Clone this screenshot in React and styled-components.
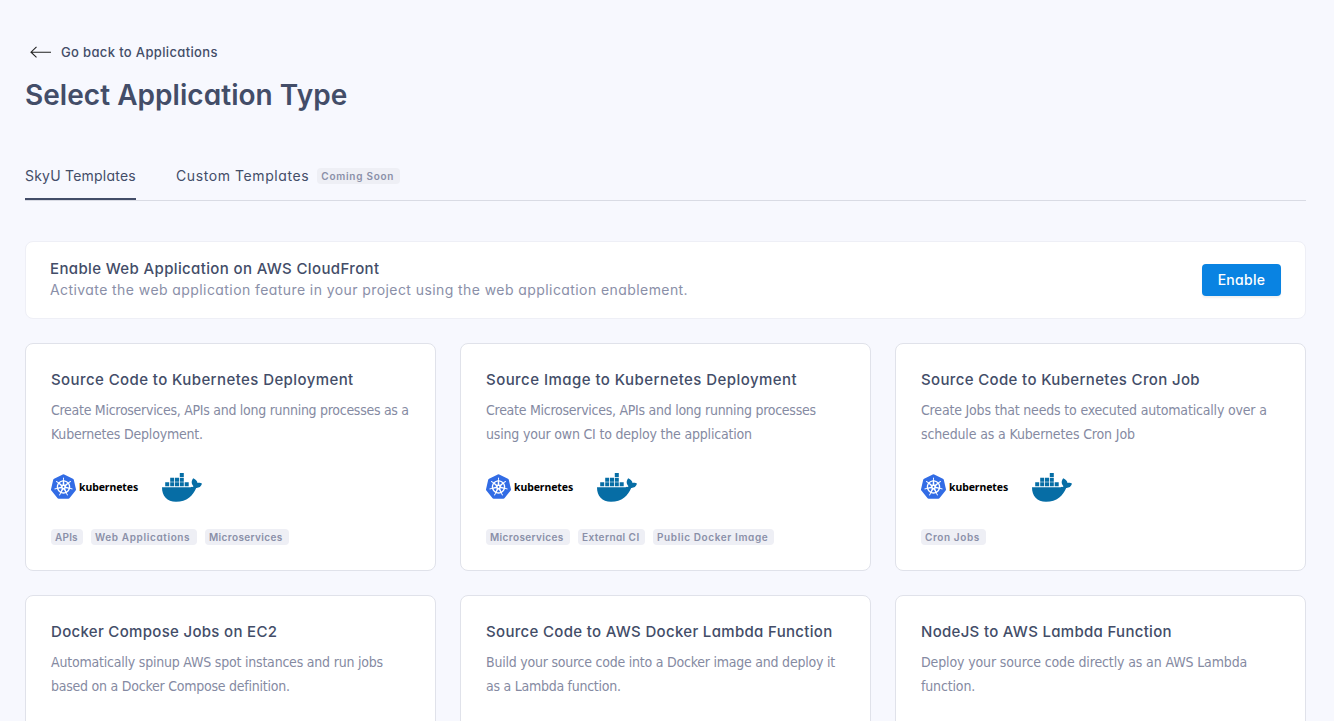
import React from 'react';
import styled, { createGlobalStyle } from 'styled-components';
import { SiKubernetes } from 'react-icons/si';

const GlobalStyle = createGlobalStyle`
  * { box-sizing: border-box; }
  html, body { margin: 0; height: 721px; overflow: hidden; background: #f7f8fe; }
  body {
    font-family: Inter, "Open Sans", sans-serif;
    font-feature-settings: "cv11", "ss03";
    color: #434d68;
  }
`;

const Page = styled.main`
  height: 721px;
  overflow: hidden;
  padding: 40px 28px 0 25px;
`;

const BackLink = styled.a`
  display: flex;
  align-items: center;
  gap: 10px;
  height: 24px;
  padding-left: 5px;
  font-size: 13px;
  font-weight: 500;
`;

const Title = styled.h1`
  margin: 10px 0 0;
  height: 42px;
  line-height: 42px;
  font-size: 28px;
  font-weight: 600;
`;

const Tabs = styled.nav`
  display: flex;
  gap: 40px;
  height: 46px;
  margin-top: 39px;
  border-bottom: 1px solid #d9dbe4;
`;

const Tab = styled.div`
  display: flex;
  align-items: center;
  gap: 8px;
  width: ${(p) => (p.$w ? `${p.$w}px` : 'auto')};
  height: 45px;
  padding-bottom: ${(p) => (p.$active ? 1 : 3)}px;
  border-bottom: ${(p) => (p.$active ? '2px solid #434d68' : '0')};
  font-size: 14px;
  white-space: nowrap;
`;

const Fit = styled.span`
  display: block;
  white-space: nowrap;
  letter-spacing: ${(p) => p.$ls || 0}px;
`;

const TabLabel = styled(Fit)`
  padding-bottom: 2px;
`;

const Tag = styled.span`
  display: block;
  width: ${(p) => p.$w}px;
  height: 16px;
  padding-left: 4px;
  border-radius: 4px;
  background: #eeeff5;
  color: #8a8fa8;
  font-size: 10px;
  font-weight: 600;
  line-height: 16px;
  letter-spacing: ${(p) => p.$ls || 0}px;
  white-space: nowrap;
`;

const Banner = styled.section`
  display: flex;
  align-items: center;
  justify-content: space-between;
  height: 78px;
  margin-top: 40px;
  padding: 0 24px;
  border: 1px solid #eeeff6;
  border-radius: 8px;
  background: #fff;
`;

const BannerCopy = styled.div`
  padding-bottom: 2px;
`;

const BannerTitle = styled.div`
  font-size: 15px;
  font-weight: 500;
  line-height: 22px;
`;

const BannerText = styled.div`
  font-size: 14px;
  line-height: 20px;
  color: #8a8fa8;
`;

const Button = styled.button`
  width: 79px;
  height: 32px;
  border: 0;
  border-radius: 4px;
  background: #0983e2;
  box-shadow: 0 2px 2px rgba(0, 0, 0, 0.06);
  color: #fff;
  font: 500 14px Inter, sans-serif;
  font-feature-settings: inherit;
  letter-spacing: 0.3px;
  padding: 0 0 1px;
`;

const Grid = styled.section`
  display: grid;
  grid-template-columns: repeat(3, minmax(0, 1fr));
  gap: 24px;
  margin-top: 24px;
`;

const Card = styled.article`
  height: 228px;
  padding: 24px 25px;
  border: 1px solid #e0e2ea;
  border-radius: 8px;
  background: #fff;
`;

const CardTitle = styled.h2`
  margin: 0;
  font-size: 15px;
  font-weight: 500;
  line-height: 24px;
`;

const Description = styled.div`
  margin-top: 6px;
  font-family: "DejaVu Sans Condensed", "DejaVu Sans", sans-serif;
  font-stretch: condensed;
  font-size: 14px;
  line-height: 24px;
  color: #858aa2;
`;

const Logos = styled.div`
  display: flex;
  align-items: center;
  height: 32px;
  margin-top: 25px;
`;

const Kubernetes = styled.div`
  display: flex;
  align-items: center;
  gap: 3px;
  width: 111px;
  padding-bottom: 1px;
  font: 700 10.5px "Noto Sans", sans-serif;
  color: #000;
  svg { color: #326ce5; }
`;

const Tags = styled.div`
  display: flex;
  gap: 8px;
  margin-top: 26px;
`;

const Arrow = () => (
  <svg width="21" height="12" viewBox="0 0 21 12" fill="none" stroke="#222" strokeWidth="1.1">
    <path d="M1 6.2H21M6.5.9L1 6.2l5.5 5.2" />
  </svg>
);

const DockerLogo = () => (
  <svg width="40" height="29" viewBox="0 0 40 29" fill="#066da5">
    <path d="M17.8 0h4v4h-4zM8.2 4.7h4v4h-4zM13 4.7h4v4h-4zM17.8 4.7h4v4h-4zM3.2 9.3h4v4h-4zM8.2 9.3h4v4h-4zM13 9.3h4v4h-4zM17.8 9.3h4v4h-4zM22.7 9.3h4v4h-4z" />
    <path d="M0 14.2H28.5C30 14.2 31 13.8 31.6 13.3C29 10.7 29.3 7.6 31.2 5.2C33.8 6.5 35.5 8.3 35.5 9.9C37 9.5 39 9.8 40 10.8C39 13.8 37 15 34.2 14.9C31 22.5 25 28.7 14 28.7C5 28.7 0 23 0 14.2Z" />
  </svg>
);

const cards = [
  {
    title: ['Source Code to Kubernetes Deployment', 0.41],
    lines: [['Create Microservices, APIs and long running processes as a', -0.28], ['Kubernetes Deployment.', -0.2]],
    tags: [['APIs', 32, 0.2], ['Web Applications', 106, 0.62], ['Microservices', 84, 0.38]],
  },
  {
    title: ['Source Image to Kubernetes Deployment', 0.45],
    lines: [['Create Microservices, APIs and long running processes', -0.27], ['using your own CI to deploy the application', -0.19]],
    tags: [['Microservices', 84, 0.38], ['External CI', 67, 0.42], ['Public Docker Image', 121, 0.62]],
  },
  {
    title: ['Source Code to Kubernetes Cron Job', 0.35],
    lines: [['Create Jobs that needs to executed automatically over a', -0.18], ['schedule as a Kubernetes Cron Job', -0.14]],
    tags: [['Cron Jobs', 65, 0.6]],
  },
  {
    title: ['Docker Compose Jobs on EC2', 0.31],
    lines: [['Automatically spinup AWS spot instances and run jobs', -0.21], ['based on a Docker Compose definition.', -0.24]],
    tags: [],
  },
  {
    title: ['Source Code to AWS Docker Lambda Function', 0.32],
    lines: [['Build your source code into a Docker image and deploy it', -0.23], ['as a Lambda function.', -0.26]],
    tags: [],
  },
  {
    title: ['NodeJS to AWS Lambda Function', 0.3],
    lines: [['Deploy your source code directly as an AWS Lambda', -0.13], ['function.', -0.15]],
    tags: [],
  },
];

export default function App() {
  return (
    <Page>
      <GlobalStyle />
      <BackLink><Arrow /><Fit $ls={0.35}>Go back to Applications</Fit></BackLink>
      <Title><Fit $ls={0.04}>Select Application Type</Fit></Title>
      <Tabs>
        <Tab $active $w={111}><TabLabel $ls={0.22}>SkyU Templates</TabLabel></Tab>
        <Tab><TabLabel $ls={0.59}>Custom Templates</TabLabel><Tag $w={83} $ls={0.74}>Coming Soon</Tag></Tab>
      </Tabs>
      <Banner>
        <BannerCopy>
          <BannerTitle><Fit $ls={0.36}>Enable Web Application on AWS CloudFront</Fit></BannerTitle>
          <BannerText><Fit $ls={0.42}>Activate the web application feature in your project using the web application enablement.</Fit></BannerText>
        </BannerCopy>
        <Button>Enable</Button>
      </Banner>
      <Grid>
        {cards.map((c) => (
          <Card key={c.title[0]}>
            <CardTitle><Fit $ls={c.title[1]}>{c.title[0]}</Fit></CardTitle>
            <Description>
              {c.lines.map(([t, ls]) => <Fit key={t} $ls={ls}>{t}</Fit>)}
            </Description>
            {c.tags.length > 0 && (
              <>
                <Logos>
                  <Kubernetes><SiKubernetes size={25} /><Fit $ls={-0.1}>kubernetes</Fit></Kubernetes>
                  <DockerLogo />
                </Logos>
                <Tags>{c.tags.map(([t, w, ls]) => <Tag key={t} $w={w} $ls={ls}>{t}</Tag>)}</Tags>
              </>
            )}
          </Card>
        ))}
      </Grid>
    </Page>
  );
}
